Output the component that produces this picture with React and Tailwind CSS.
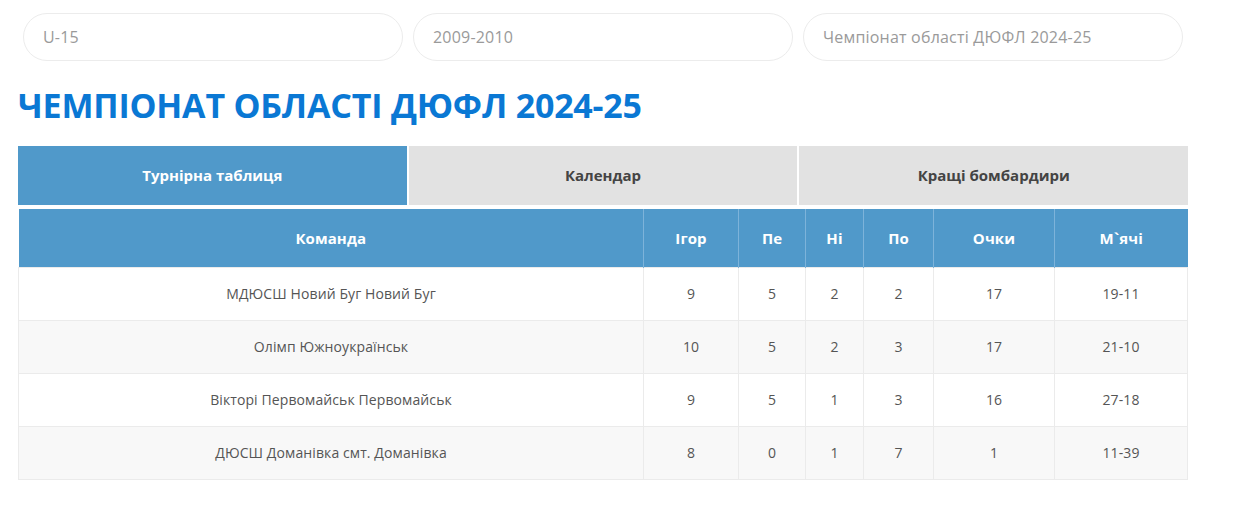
import React from "react";

const filters = ["U-15", "2009-2010", "Чемпіонат області ДЮФЛ 2024-25"];
const tabs = ["Турнірна таблиця", "Календар", "Кращі бомбардири"];

const rows = [
  { team: "МДЮСШ Новий Буг Новий Буг", games: 9, w: 5, d: 2, l: 2, pts: 17, goals: "19-11" },
  { team: "Олімп Южноукраїнськ", games: 10, w: 5, d: 2, l: 3, pts: 17, goals: "21-10" },
  { team: "Вікторі Первомайськ Первомайськ", games: 9, w: 5, d: 1, l: 3, pts: 16, goals: "27-18" },
  { team: "ДЮСШ Доманівка смт. Доманівка", games: 8, w: 0, d: 1, l: 7, pts: 1, goals: "11-39" },
];

const App = () => {
  return (
    <div className="min-h-[519px] bg-white font-['Open_Sans',sans-serif] pl-[18px] pt-[13px]">
      {/* filter pills */}
      <div className="flex gap-[10px] pl-[5px]">
        {filters.map((f) => (
          <div
            key={f}
            className="w-[380px] h-[48px] rounded-full border border-[#ececec] flex items-center px-[19px] text-[16px] text-[#9a9a9a] tracking-[0.2px]"
          >
            {f}
          </div>
        ))}
      </div>

      <h1 className="mt-[21px] text-[34px] leading-[46px] font-bold text-[#0a78d4] tracking-[-0.2px]">
        ЧЕМПІОНАТ ОБЛАСТІ ДЮФЛ 2024-25
      </h1>

      <div className="w-[1170px] mt-[18px]">
        {/* tabs */}
        <div className="flex gap-[2px]">
          {tabs.map((t, i) => (
            <div
              key={t}
              className={
                i === 0
                  ? "flex-1 h-[59px] flex items-center justify-center bg-[#5099ca] text-white text-[15px] font-bold"
                  : "flex-1 h-[59px] flex items-center justify-center bg-[#e2e2e2] text-[#444] text-[15px] font-bold"
              }
            >
              {t}
            </div>
          ))}
        </div>

        {/* standings */}
        <table className="w-full mt-[4px] border-collapse text-[14px] tracking-[0.1px]">
          <thead>
            <tr className="bg-[#5099ca] text-white text-[15px] font-bold h-[58px]">
              <th className="w-[625px] border-r border-[#7db3da]">Команда</th>
              <th className="w-[95px] border-r border-[#7db3da]">Ігор</th>
              <th className="w-[67px] border-r border-[#7db3da]">Пе</th>
              <th className="w-[58px] border-r border-[#7db3da]">Ні</th>
              <th className="w-[70px] border-r border-[#7db3da]">По</th>
              <th className="w-[121px] border-r border-[#7db3da]">Очки</th>
              <th>М`ячі</th>
            </tr>
          </thead>
          <tbody className="text-[#555]">
            {rows.map((r, i) => (
              <tr
                key={r.team}
                className={i % 2 === 0 ? "bg-white h-[53px]" : "bg-[#f8f8f8] h-[53px]"}
              >
                <td className="text-center border border-[#ebebeb]">{r.team}</td>
                <td className="text-center border border-[#ebebeb]">{r.games}</td>
                <td className="text-center border border-[#ebebeb]">{r.w}</td>
                <td className="text-center border border-[#ebebeb]">{r.d}</td>
                <td className="text-center border border-[#ebebeb]">{r.l}</td>
                <td className="text-center border border-[#ebebeb]">{r.pts}</td>
                <td className="text-center border border-[#ebebeb]">{r.goals}</td>
              </tr>
            ))}
          </tbody>
        </table>
      </div>
    </div>
  );
};

export default App;
